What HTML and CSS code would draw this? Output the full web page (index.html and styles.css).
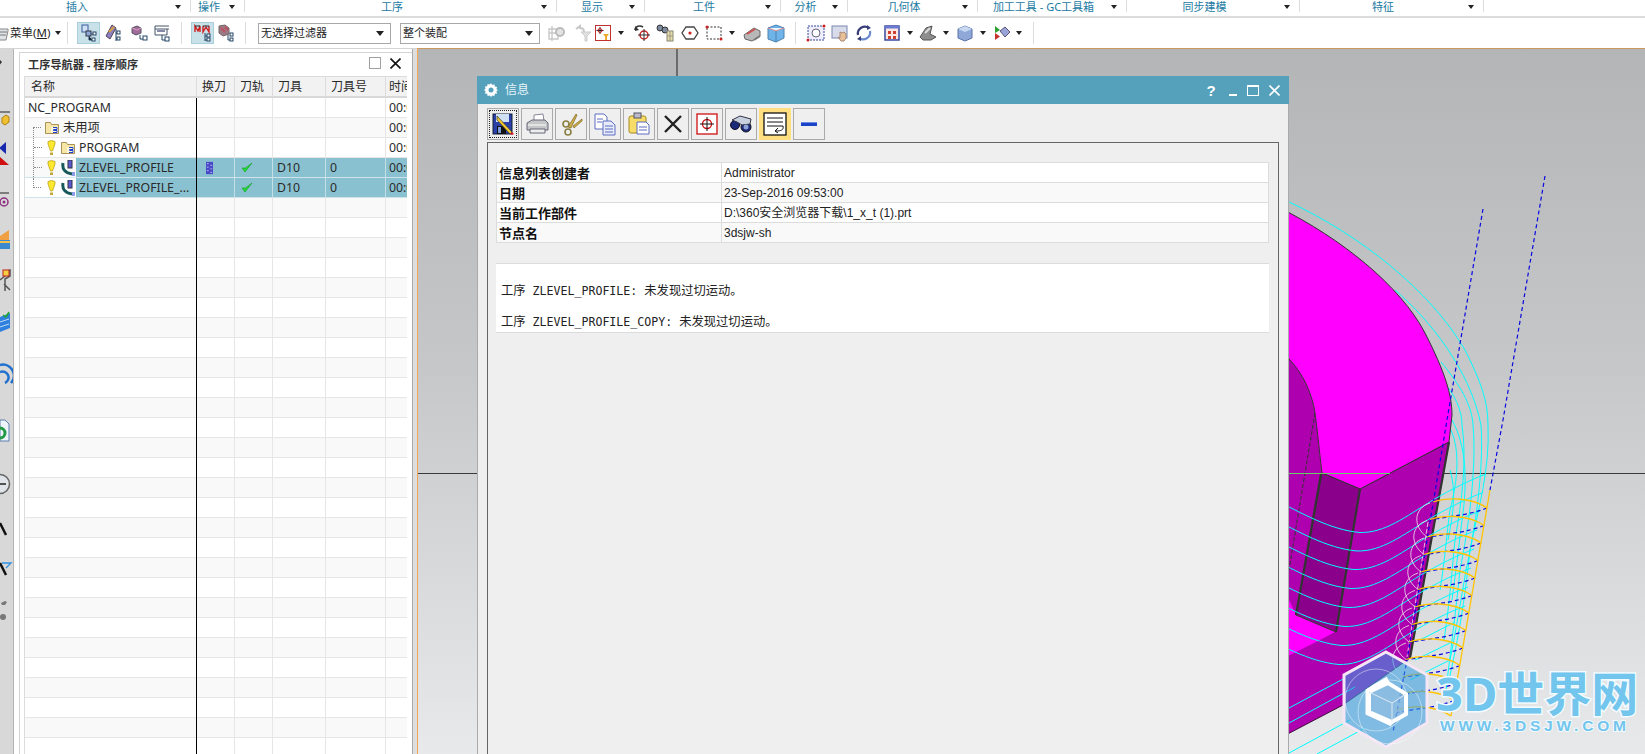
FILE: index.html
```html
<!DOCTYPE html>
<html lang="zh-CN">
<head>
<meta charset="utf-8">
<title>工序导航器</title>
<link rel="stylesheet" href="styles.css">
</head>
<body>
<div class="app">
  <header class="ribbon">
    <div class="group g1"><span>插入</span><i class="arrow"></i></div>
    <div class="group g2"><span>操作</span><i class="arrow"></i></div>
    <div class="group g3"><span>工序</span><i class="arrow"></i></div>
    <div class="group g4"><span>显示</span><i class="arrow"></i></div>
    <div class="group g5"><span>工件</span><i class="arrow"></i></div>
    <div class="group g6"><span>分析</span><i class="arrow"></i></div>
    <div class="group g7"><span>几何体</span><i class="arrow"></i></div>
    <div class="group g8"><span>加工工具 - GC工具箱</span><i class="arrow"></i></div>
    <div class="group g9"><span>同步建模</span><i class="arrow"></i></div>
    <div class="group g10"><span>特征</span><i class="arrow"></i></div>
  </header>

  <nav class="toolbar">
    <svg class="menu-icon" viewBox="0 0 10 20"><path d="M-6 6h14v2l-2 9H-6z" fill="#dfe3e6" stroke="#888"/><path d="M0 9h7M0 12h6" stroke="#777"/></svg>
    <span class="menu-label">菜单(<u>M</u>)</span>
    <i class="arrow a-box"></i>
    <i class="sep s1"></i>
    <div class="t hl"><svg viewBox="0 0 20 20"><rect x="3" y="2" width="6" height="7" fill="#cfe0f5" stroke="#3a5a9a"/><rect x="7" y="8" width="5" height="5" fill="#8fa8d8" stroke="#334"/><path d="M10 13v4h3M12 11h3" stroke="#246"/><rect x="14" y="9" width="3" height="3" fill="#fff" stroke="#246"/><rect x="13" y="15" width="3" height="3" fill="#fff" stroke="#246"/></svg></div>
    <div class="t"><svg viewBox="0 0 20 20"><path d="M10 2 4 13l4 3 6-11z" fill="#8a7fc0" stroke="#545"/><path d="M7 9l5-5" stroke="#d8a040" stroke-width="2"/><path d="M14 6v12M14 10h3M14 16h3" stroke="#246" fill="none"/><rect x="15" y="8" width="3" height="3" fill="#fff" stroke="#246"/><rect x="15" y="14" width="3" height="3" fill="#fff" stroke="#246"/></svg></div>
    <div class="t wide"><svg viewBox="0 0 20 20"><path d="M3 5l5-2 4 2v5l-5 2-4-2z" fill="#a06a9a" stroke="#556"/><path d="M3 5l5 2 4-2" stroke="#d9a0c0" fill="none"/><path d="M11 12v4h3" stroke="#246" fill="none"/><rect x="14" y="13" width="4" height="4" fill="#fff" stroke="#246"/></svg></div>
    <div class="t narrow"><svg viewBox="0 0 16 20"><path d="M1 3h14M1 6h14M1 3v9h12V6" fill="none" stroke="#456"/><path d="M3 8h8" stroke="#88a" stroke-width="2"/><path d="M8 12v5h3" stroke="#246" fill="none"/><rect x="11" y="14" width="4" height="4" fill="#fff" stroke="#246"/></svg></div>
    <i class="sep s2"></i>
    <div class="t hl"><svg viewBox="0 0 20 20"><path d="M2 9V3l3 5 2-5v6M10 3v6l3-5 3 5V3" fill="none" stroke="#d02020" stroke-width="1.400"/><path d="M2 3h5M10 3h6" stroke="#222"/><path d="M12 10v8M12 13h2M12 17h2" stroke="#246" fill="none"/><rect x="14" y="11" width="3" height="3" fill="#fff" stroke="#246"/><rect x="14" y="15" width="3" height="3" fill="#fff" stroke="#246"/></svg></div>
    <div class="t"><svg viewBox="0 0 20 20"><path d="M3 3l6-1 4 3v6l-6 2-4-3z" fill="#9a7a85" stroke="#766"/><path d="M5 5l4 4M9 4l3 3" stroke="#c05060" stroke-width="2"/><path d="M12 12v5h3" stroke="#246" fill="none"/><rect x="14" y="10" width="3" height="3" fill="#fff" stroke="#246"/><rect x="14" y="15" width="3" height="3" fill="#fff" stroke="#246"/></svg></div>
    <i class="sep s3"></i>
    <div class="combo c1"><span>无选择过滤器</span><i class="arrow"></i></div>
    <div class="combo c2"><span>整个装配</span><i class="arrow"></i></div>

    <div class="t m4"><svg viewBox="0 0 20 20"><path d="M3 6h9v10H3zM6 3v15M3 10h9" fill="none" stroke="#c8c8c8" stroke-width="1.400"/><circle cx="14" cy="9" r="4" fill="#e4e4e4" stroke="#bbb" stroke-width="2"/></svg></div>
    <div class="t m3"><svg viewBox="0 0 20 20"><path d="M3 6l4-3v2c3 0 4 2 4 4" fill="none" stroke="#c8c8c8" stroke-width="2"/><path d="M8 9h10l-4 4v5h-2v-5z" fill="#e0e0e0" stroke="#ccc"/></svg></div>
    <div class="t box16"><svg viewBox="0 0 16 16"><rect x=".5" y=".5" width="15" height="15" fill="#fff" stroke="#c23030"/><path d="M5 2v7M1.500 5.500h7" stroke="#222"/><circle cx="5" cy="5.500" r="2" fill="none" stroke="#c22"/><path d="M8 9h6l-2 2.500V15h-2v-3.500z" fill="#eda92a"/></svg></div>
    <i class="arrow a-box m4"></i>
    <div class="t m3"><svg viewBox="0 0 20 20"><path d="M3 7c0-4 5-5 8-3" fill="none" stroke="#333" stroke-width="1.600"/><path d="M3 3l0 5 4-1z" fill="#333"/><circle cx="12" cy="12" r="4" fill="none" stroke="#c22" stroke-width="1.500"/><path d="M12 6v12M6 12h12" stroke="#333"/></svg></div>
    <div class="t n22"><svg viewBox="0 0 20 20"><circle cx="5" cy="5" r="3" fill="#7d8aa0" stroke="#333"/><circle cx="10" cy="7" r="3" fill="#7d8aa0" stroke="#333"/><rect x="12" y="8" width="6" height="10" fill="#e8dca8" stroke="#887"/><path d="M15 8v10M12 13h6" stroke="#998"/></svg></div>
    <div class="t m2"><svg viewBox="0 0 20 20"><path d="M6 4h8l4 6-4 6H6l-4-6z" fill="#fff" stroke="#444" stroke-width="1.300"/><circle cx="10" cy="10" r="1.600" fill="#c22"/></svg></div>
    <div class="t"><svg viewBox="0 0 20 20"><rect x="3" y="4" width="14" height="12" fill="none" stroke="#333" stroke-dasharray="2 1.500"/><circle cx="3" cy="4" r="1.500" fill="#c22"/><circle cx="17" cy="16" r="1.500" fill="#c22"/></svg></div>
    <i class="arrow a-box"></i>
    <div class="t m2"><svg viewBox="0 0 20 20"><path d="M2 12l10-7 6 3v5l-8 5-7-2z" fill="#b8b8b8" stroke="#666"/><path d="M5 11l8-5" stroke="#d05050" stroke-width="2"/><path d="M12 17l6-4" stroke="#777" stroke-width="2"/></svg></div>
    <div class="t"><svg viewBox="0 0 20 20"><path d="M2 5l8-3 8 3v10l-8 4-8-3z" fill="#6fb4e8" stroke="#4a82b0"/><path d="M2 5l8 3 8-3" fill="#e8f3fb" stroke="#d88"/><path d="M10 8v11" stroke="#4a82b0"/></svg></div>
    <i class="sep s4"></i>
    <div class="t"><svg viewBox="0 0 20 20"><rect x="2" y="3" width="16" height="14" fill="#eef" stroke="#3a4a9a" stroke-dasharray="2 1"/><circle cx="10" cy="10" r="4" fill="#fff" stroke="#667"/><circle cx="2" cy="17" r="1.500" fill="#c22"/><circle cx="18" cy="3" r="1.500" fill="#c22"/></svg></div>
    <div class="t"><svg viewBox="0 0 20 20"><rect x="2" y="3" width="15" height="12" fill="#d8dcea" stroke="#7a86b0"/><path d="M10 9l2 1 2-1 2 2v4l-2 3h-3l-3-4 2 1z" fill="#e8c098" stroke="#a87"/></svg></div>
    <div class="t"><svg viewBox="0 0 20 20"><path d="M4 12A7 7 0 0 1 15 5" fill="none" stroke="#3a3f7a" stroke-width="2.200"/><path d="M16 8A7 7 0 0 1 5 15" fill="none" stroke="#6a8ad0" stroke-width="2.200"/><path d="M13 2l4 3-4 2zM7 13l-4 3 4 2z" fill="#3a3f7a"/></svg></div>
    <div class="t m4"><svg viewBox="0 0 20 20"><rect x="3" y="3" width="14" height="14" fill="#fbe8e4" stroke="#3a4aa0" stroke-width="1.500"/><rect x="3" y="3" width="14" height="2.500" fill="#6a7ad0"/><path d="M6 8h3v3H6zM11 8h3v3h-3zM6 13h3v3H6zM11 13h3v3h-3z" fill="#d04030"/></svg></div>
    <i class="arrow a-box"></i>
    <div class="t"><svg viewBox="0 0 20 20"><path d="M2 14l6-9 6-2-2 8 6 3-5 3H5z" fill="#8d8d8d" stroke="#555"/><path d="M7 10l5-5" stroke="#ddd" stroke-width="2"/></svg></div>
    <i class="arrow a-box"></i>
    <div class="t m1"><svg viewBox="0 0 20 20"><path d="M3 6l7-3 7 3v9l-7 3-7-3z" fill="#8ea8d8" stroke="#5a70a8"/><path d="M3 6l7 3 7-3-7-3z" fill="#c8d8f0"/></svg></div>
    <i class="arrow a-box"></i>
    <div class="t"><svg viewBox="0 0 20 20"><path d="M9 8l5-4 5 5-5 5z" fill="#9aa4d8" stroke="#557"/><path d="M4 3v7l5-3z" fill="#2ca02c"/><path d="M4 10v7l5-3.500z" fill="#c83030"/></svg></div>
    <i class="arrow a-box"></i>
    <i class="sep s5"></i>
  </nav>

  <main class="workspace">
    <aside class="strip">
      <svg viewBox="0 49 13 705">
        <path d="M-2 58l4 4-4 5" fill="#333"/>
        <path d="M0 112h10" stroke="#222"/><path d="M2 118l4-3 3 2v5l-4 3-3-2z" fill="#f0c030" stroke="#b08010"/>
        <path d="M6 142v12l-7-6z" fill="#1a2ab0"/><path d="M-1 156l10 9H-1z" fill="#d01010"/>
        <path d="M0 193h9" stroke="#222"/><circle cx="4" cy="202" r="4" fill="none" stroke="#903080" stroke-width="1.500"/><circle cx="4" cy="202" r="1.500" fill="#903080"/>
        <path d="M0 236l9-6v10H0z" fill="#f0a040"/><path d="M0 240h10v9H0z" fill="#3a8ad0"/><path d="M0 242h10" stroke="#f4c050" stroke-width="2"/>
        <path d="M0 280l5-4v-4l5-2v6l-5 3v12M4 284l6 6" fill="none" stroke="#555" stroke-width="1.500"/><rect x="3" y="270" width="6" height="6" fill="#f6d040" stroke="#c02020"/>
        <path d="M0 317l10-4v15l-10 4z" fill="#3080e0"/><path d="M0 322l9-3M0 327l9-3" stroke="#bde"/><path d="M3 315l3 2 3-5" stroke="#2a2" fill="none" stroke-width="1.500"/>
        <path d="M0 365a11 11 0 0 1 11 18M0 372a6 6 0 0 1 5 11" fill="none" stroke="#2070d0" stroke-width="2.500"/>
        <path d="M0 420h5l4 4v17H0z" fill="#eef4fb" stroke="#5a80b0"/><path d="M0 428a5 5 0 0 1 0 10" fill="none" stroke="#229a44" stroke-width="3"/>
        <circle cx="0" cy="484" r="9.500" fill="#dfe3ea" stroke="#666" stroke-width="1.500"/><path d="M0 484h6" stroke="#222" stroke-width="1.500"/>
        <path d="M0 523l6 12" stroke="#111" stroke-width="2.500"/>
        <path d="M0 563l6 12" stroke="#111" stroke-width="2.500"/><path d="M2 563h9l-5 5" fill="none" stroke="#3090e0" stroke-width="1.300"/>
        <path d="M1 603l4-2 2 1-2 3H2zM0 617a3 3 0 0 1 6 0 3 3 0 0 1-6 0" fill="#777"/>
      </svg>
    </aside>

    <section class="navigator">
      <div class="nav-title">
        <h2>工序导航器 - 程序顺序</h2>
        <i class="nav-max"></i>
        <svg class="nav-close" viewBox="0 0 11 11"><path d="M.5.5l10 10M10.500.5l-10 10" stroke="#111" stroke-width="1.600"/></svg>
      </div>
      <div class="table">
        <div class="row head"><span>名称</span><span>换刀</span><span>刀轨</span><span>刀具</span><span>刀具号</span><span>时间</span></div>
        <div class="rows">
          <div class="row">
            <span class="name plain">NC_PROGRAM</span><span></span><span></span><span></span><span></span><span>00:00</span>
          </div>
          <div class="row">
            <span class="name"><i class="conn first short"></i>
              <svg class="folder" viewBox="0 0 14 12"><path d="M.5 11.500v-11h5l1 2h7v9z" fill="#f6e6a8" stroke="#a8925a"/><path d="M6 5h7v6H6z" fill="#fff8d8"/><path d="M8 5.500h4v2H8.500v1H12v2H8" fill="none" stroke="#2040d0"/></svg>
              <b>未用项</b></span><span></span><span></span><span></span><span></span><span>00:00</span>
          </div>
          <div class="row">
            <span class="name"><i class="conn"></i>
              <svg class="bulb" viewBox="0 0 9 16"><path d="M1 1.500 4.500.5 8 1.500V4L5.500 11h-2L1 4z" fill="#ffe92e" stroke="#b09a10" stroke-width=".7"/><path d="M3 12.500h3V15H3z" fill="#c2a83a"/></svg>
              <svg class="folder" viewBox="0 0 14 12"><path d="M.5 11.500v-11h5l1 2h7v9z" fill="#f6e6a8" stroke="#a8925a"/><path d="M6 5h7v6H6z" fill="#fff8d8"/><path d="M8 5.500h4v2H8.500v1H12v2H8" fill="none" stroke="#2040d0"/></svg>
              <b>PROGRAM</b></span><span></span><span></span><span></span><span></span><span>00:00</span>
          </div>
          <div class="row sel">
            <span class="name"><i class="conn"></i>
              <svg class="bulb" viewBox="0 0 9 16"><path d="M1 1.500 4.500.5 8 1.500V4L5.500 11h-2L1 4z" fill="#ffe92e" stroke="#b09a10" stroke-width=".7"/><path d="M3 12.500h3V15H3z" fill="#c2a83a"/></svg>
              <svg class="op" viewBox="0 0 14 16"><path d="M2 3c-1 6 2 10 9 11" fill="none" stroke="#17585a" stroke-width="3"/><rect x="7" y="0" width="4" height="8" fill="#5a5ad0" stroke="#334"/><path d="M11 13h3M11 15h3" stroke="#2040d0"/></svg>
              <b>ZLEVEL_PROFILE</b></span>
            <span class="center"><svg class="tool" viewBox="0 0 8 14"><rect width="8" height="14" fill="#4a4ac8"/><path d="M1 2h2M5 4h2M1 6h2M5 8h2M1 10h2M5 12h2" stroke="#c0c8f0"/></svg></span>
            <span class="center"><svg class="check" viewBox="0 0 12 11"><path d="M1 6l3 4 7-9-6.500 5z" fill="#22dd33" stroke="#119922" stroke-width=".6"/></svg></span>
            <span>D10</span><span>0</span><span>00:00</span>
          </div>
          <div class="row sel">
            <span class="name"><i class="conn last"></i>
              <svg class="bulb" viewBox="0 0 9 16"><path d="M1 1.500 4.500.5 8 1.500V4L5.500 11h-2L1 4z" fill="#ffe92e" stroke="#b09a10" stroke-width=".7"/><path d="M3 12.500h3V15H3z" fill="#c2a83a"/></svg>
              <svg class="op" viewBox="0 0 14 16"><path d="M2 3c-1 6 2 10 9 11" fill="none" stroke="#17585a" stroke-width="3"/><rect x="7" y="0" width="4" height="8" fill="#5a5ad0" stroke="#334"/><path d="M11 13h3M11 15h3" stroke="#2040d0"/></svg>
              <b>ZLEVEL_PROFILE_...</b></span>
            <span></span>
            <span class="center"><svg class="check" viewBox="0 0 12 11"><path d="M1 6l3 4 7-9-6.500 5z" fill="#22dd33" stroke="#119922" stroke-width=".6"/></svg></span>
            <span>D10</span><span>0</span><span>00:00</span>
          </div>
          <div class="row blank"></div><div class="row blank"></div><div class="row blank"></div><div class="row blank"></div>
          <div class="row blank"></div><div class="row blank"></div><div class="row blank"></div><div class="row blank"></div>
          <div class="row blank"></div><div class="row blank"></div><div class="row blank"></div><div class="row blank"></div>
          <div class="row blank"></div><div class="row blank"></div><div class="row blank"></div><div class="row blank"></div>
          <div class="row blank"></div><div class="row blank"></div><div class="row blank"></div><div class="row blank"></div>
          <div class="row blank"></div><div class="row blank"></div><div class="row blank"></div><div class="row blank"></div>
          <div class="row blank"></div><div class="row blank"></div><div class="row blank"></div><div class="row blank"></div>
        </div>
      </div>
    </section>
    <div class="gutter"></div>

    <section class="canvas">
      <svg class="scene" viewBox="418 49 1227 705">
        <defs>
          <path id="cy" d="M1275 500C1300 512 1330 530 1360 532.500C1385 533 1405 517 1433 500C1450 490 1470 480 1486 474"/>
          <path id="yl" d="M1433 502C1445 498 1470 496 1487 508"/>
          <path id="bl" d="M1487 508C1470 515 1450 516 1430 520"/>
          <path id="wh" d="M1430 503C1414 508 1412 526 1427 537"/>
        </defs>
        <path d="M677 49V76M418 473.500H1645" stroke="#3a3a3a" stroke-width="1.200" fill="none"/>

        <g class="cyan">
          <path d="M1289 202C1360 235 1430 290 1465 350C1480 380 1488 400 1488 425C1490 470 1478 510 1470 550C1465 600 1458 640 1449 680"/>
          <path d="M1395 290C1430 320 1470 370 1481 425C1484 470 1475 530 1466 570C1461 600 1456 630 1450 660"/>
          <path d="M1441 362C1460 385 1472 405 1473 425C1477 470 1468 530 1460 570C1457 600 1452 640 1446 690"/>
          <path d="M1442 380C1455 395 1462 410 1462 425C1467 460 1462 500 1455 540C1452 570 1450 600 1444 640"/>
          <path d="M1451 430C1460 450 1458 480 1450 510C1447 530 1445 560 1440 590"/>
          <path d="M1452 420C1466 445 1468 480 1462 520C1459 545 1456 570 1452 600"/>
          <path d="M1450 470C1456 490 1454 510 1448 540"/>
        </g>

        <path d="M1289 356C1300 368 1308 385 1313 403C1316 415 1318 440 1322 473L1296 615L1280 640V350Z" fill="#ae00ae"/>
        <path d="M1360 489L1449 442L1410 658L1343 705L1280 738V657L1336 632Z" fill="#ae00ae" stroke="#3a103a"/>
        <path d="M1280 208C1340 238 1400 285 1425 333C1445 372 1452 395 1452 415L1449 442L1360 489L1322 473C1318 440 1316 415 1313 403C1308 385 1300 368 1280 350Z" fill="#ff00ff" stroke="#333"/>
        <path d="M1280 580L1296 615L1336 632L1280 660Z" fill="#ff00ff"/>
        <path d="M1322 473L1360 489L1336 632L1296 615Z" fill="#8b008b" stroke="#333"/>
        <path d="M1321 474L1296 615M1360 489L1336 632M1449 442L1410 658" stroke="#333" stroke-width="2.200" fill="none"/>
        <path d="M1315 413L1289 570" stroke="#333" stroke-dasharray="4 2" fill="none"/>
        <path d="M1289 473.500H1390" stroke="#66d066" stroke-width="1.200"/>

        <g class="cyan">
          <use href="#cy"/><use href="#cy" transform="translate(-3 18.500)"/><use href="#cy" transform="translate(-6 37)"/><use href="#cy" transform="translate(-9 56)"/>
          <use href="#cy" transform="translate(-12 75)"/><use href="#cy" transform="translate(-15 94)"/><use href="#cy" transform="translate(-18 113)"/><use href="#cy" transform="translate(-21 132)"/>
          <path d="M1289 708L1345 678M1289 723L1355 687M1289 753L1350 720M1317 754L1365 728M1420 640L1455 622M1415 660L1452 642M1410 680L1450 660"/>
        </g>

        <g class="white">
          <use href="#wh"/><use href="#wh" transform="translate(-3 17.500)"/><use href="#wh" transform="translate(-6 35)"/><use href="#wh" transform="translate(-9 52.500)"/><use href="#wh" transform="translate(-12 70)"/>
          <use href="#wh" transform="translate(-15 87.500)"/><use href="#wh" transform="translate(-18 105)"/><use href="#wh" transform="translate(-21 122.500)"/><use href="#wh" transform="translate(-24 140)"/>
          <path d="M1428 522L1407 657" stroke-dasharray="5 2"/>
        </g>

        <g class="blue">
          <path d="M1483 209L1447 420L1407 660L1393 732"/>
          <path d="M1545 176L1503 420L1490 490"/>
          <use href="#bl"/><use href="#bl" transform="translate(-3 17.500)"/><use href="#bl" transform="translate(-6 35)"/><use href="#bl" transform="translate(-9 52.500)"/>
          <use href="#bl" transform="translate(-12 70)"/><use href="#bl" transform="translate(-15 87.500)"/><use href="#bl" transform="translate(-18 105)"/><use href="#bl" transform="translate(-21 122.500)"/>
          <use href="#bl" transform="translate(-24 140)"/><use href="#bl" transform="translate(-27 157.500)"/><use href="#bl" transform="translate(-30 175)"/><use href="#bl" transform="translate(-33 192.500)"/>
        </g>

        <g class="yellow">
          <path d="M1490 490L1451 716"/>
          <use href="#yl"/><use href="#yl" transform="translate(-3 17.500)"/><use href="#yl" transform="translate(-6 35)"/><use href="#yl" transform="translate(-9 52.500)"/>
          <use href="#yl" transform="translate(-12 70)"/><use href="#yl" transform="translate(-15 87.500)"/><use href="#yl" transform="translate(-18 105)"/><use href="#yl" transform="translate(-21 122.500)"/>
          <use href="#yl" transform="translate(-24 140)"/><use href="#yl" transform="translate(-27 157.500)"/><use href="#yl" transform="translate(-30 175)"/><use href="#yl" transform="translate(-33 192.500)"/>
          <use href="#yl" transform="translate(-36 208)"/>
        </g>

        <g class="mark">
          <path class="hex" d="M1386 652L1427 675V723L1386 747L1344 723V675Z"/>
          <circle cx="1390" cy="712" r="32" class="ring"/>
          <circle cx="1376" cy="700" r="31" class="ring"/>
          <path class="inner" d="M1388 679L1368 691V713L1392 724"/>
          <path class="cube" d="M1388 683L1406 694V714L1392 722L1369 712V692Z"/>
          <path class="cube-top" d="M1369 692L1392 703L1406 694M1392 703V722"/>
          <text x="1436" y="711" class="mark-big">3D世界网</text>
          <text x="1440" y="731" class="mark-small">WWW.3DSJW.COM</text>
        </g>
      </svg>

      <div class="dialog">
        <div class="dlg-title">
          <svg class="gear" viewBox="0 0 14 14"><path d="M7 0l1.200 2 2.200-.7.400 2.300 2.300.4-.7 2.200L14 7l-1.600 1.200.7 2.200-2.300.4-.4 2.300-2.200-.7L7 14l-1.200-1.600-2.200.7-.4-2.300-2.300-.4.700-2.200L0 7l1.600-1.200-.7-2.200 2.300-.4.400-2.300 2.200.7z" fill="#fff"/><circle cx="7" cy="7" r="2.500" fill="#55a1bc"/></svg>
          <span class="dlg-name">信息</span>
          <span class="dlg-q">?</span>
          <i class="dlg-min"></i>
          <i class="dlg-max"></i>
          <svg class="dlg-close" viewBox="0 0 11 11"><path d="M.5.5l10 10M10.500.5l-10 10" stroke="#fff" stroke-width="1.600"/></svg>
        </div>
        <div class="dlg-tools">
          <button class="btn focus"><svg viewBox="0 0 24 24"><rect x="2" y="2" width="19" height="20" fill="#2a3fa8" stroke="#123"/><rect x="5" y="2" width="13" height="8" fill="#cfe0f4"/><rect x="6" y="14" width="9" height="8" fill="#111"/><rect x="7" y="15" width="3" height="6" fill="#7a9ae0"/><path d="M6 4l15 16-2 2L6 8z" fill="#f2c830" stroke="#333" stroke-width=".7"/><path d="M19 22l2-2 2 2-2 1z" fill="#e02030"/></svg></button>
          <button class="btn"><svg viewBox="0 0 24 24"><path d="M9 3l9-1 1 7H9z" fill="#fff" stroke="#889"/><path d="M2 11l5-3h13l3 3v7H2z" fill="#c4c6c8" stroke="#667"/><path d="M5 17h15v4H5z" fill="#eee" stroke="#667"/><path d="M3 13h18" stroke="#fff"/></svg></button>
          <button class="btn"><svg viewBox="0 0 24 24"><path d="M9 15L17 2l1 1-6 13zM14 14l9-7v2l-8 7z" fill="#d0b04a" stroke="#7a6420" stroke-width=".7"/><circle cx="7" cy="12" r="3" fill="none" stroke="#8a8040" stroke-width="1.600"/><circle cx="9" cy="20" r="3" fill="none" stroke="#8a8040" stroke-width="1.600"/></svg></button>
          <button class="btn"><svg viewBox="0 0 24 24"><path d="M2 2h9l3 3v12H2z" fill="#fff" stroke="#5a6ac0"/><path d="M10 9h8l4 4v10H10z" fill="#e8ecfa" stroke="#5a6ac0"/><path d="M4 7h6M4 10h5M12 14h8M12 17h8M12 20h8" stroke="#5a6ac0"/></svg></button>
          <button class="btn"><svg viewBox="0 0 24 24"><rect x="2" y="4" width="17" height="17" rx="2" fill="#f7dc68" stroke="#a88a20"/><rect x="7" y="1" width="7" height="5" fill="#bbc" stroke="#556"/><path d="M10 10h9l3 3v9H10z" fill="#fff" stroke="#5a6ac0"/><path d="M12 15h8M12 18h8" stroke="#5a6ac0"/></svg></button>
          <button class="btn"><svg viewBox="0 0 24 24"><path d="M4 4l16 16M20 4L4 20" stroke="#222" stroke-width="2.400"/></svg></button>
          <button class="btn"><svg viewBox="0 0 24 24"><rect x="2" y="2" width="20" height="20" fill="#fff" stroke="#d01010" stroke-width="1.300"/><circle cx="12" cy="12" r="4.500" fill="none" stroke="#d01010" stroke-width="1.300"/><path d="M12 5v14M5 12h14" stroke="#111"/></svg></button>
          <button class="btn"><svg viewBox="0 0 24 24"><circle cx="6" cy="13" r="4.500" fill="#1a2a78" stroke="#112"/><circle cx="17" cy="15" r="5" fill="#1a2a78" stroke="#112"/><path d="M3 8l8-4 11 3-1 5-8 1-5-3z" fill="#c8d0e0" stroke="#334"/><circle cx="17" cy="15" r="2.500" fill="#8fa0d8"/></svg></button>
          <button class="btn on"><svg viewBox="0 0 24 24"><rect x="1" y="1" width="22" height="22" fill="#fff" stroke="#111" stroke-width="1.300"/><path d="M4 6h16M4 10h16M4 14h16c1 4-2 5-7 5" fill="none" stroke="#111"/><path d="M15 16l-3 3 3 2" fill="none" stroke="#111"/></svg></button>
          <button class="btn"><svg viewBox="0 0 24 24"><rect x="4" y="10" width="16" height="4" fill="#1a44c8"/><rect x="4" y="10" width="16" height="1" fill="#6a8ae8"/></svg></button>
        </div>
        <div class="dlg-body">
          <div class="info">
            <div class="info-row"><b>信息列表创建者</b><span>Administrator</span></div>
            <div class="info-row"><b>日期</b><span>23-Sep-2016 09:53:00</span></div>
            <div class="info-row"><b>当前工作部件</b><span>D:\360安全浏览器下载\1_x_t (1).prt</span></div>
            <div class="info-row"><b>节点名</b><span>3dsjw-sh</span></div>
          </div>
          <div class="message">
            <p>工序<code> ZLEVEL_PROFILE: </code>未发现过切运动。</p>
            <p>工序<code> ZLEVEL_PROFILE_COPY: </code>未发现过切运动。</p>
          </div>
        </div>
      </div>
    </section>
  </main>
</div>
</body>
</html>
```
FILE: styles.css
```css
* { box-sizing: border-box; }
html, body { margin: 0; height: 100%; overflow: hidden; background: #fff; }
body { font: 12px/1.2 "Noto Sans", "Noto Sans CJK SC", sans-serif; color: #222; }
i { display: block; font-style: normal; }
svg { display: block; }

.app { width: 1645px; height: 754px; display: flex; flex-direction: column; overflow: hidden; }

/* ribbon tabs */
.ribbon { height: 18px; flex: none; display: flex; align-items: flex-start; border-bottom: 2px solid #dcdcdc; overflow: hidden; }
.group { height: 12px; flex: none; display: flex; border-right: 1px solid #dcdcdc; font-size: 11px; line-height: 14px; color: #1b7aa2; }
.group span { flex: 1; text-align: center; white-space: nowrap; }
.group .arrow { width: 17px; }
.group .arrow::after { margin: 5px 0 0 2px; }
.arrow::after { content: ""; display: block; width: 0; height: 0; border: 3.500px solid transparent; border-top: 4px solid #222; border-bottom: 0; }
.g1 { width: 210px; margin-left: -19px; }
.g2 { width: 54px; }
.g3 { width: 312px; }
.g4 { width: 88px; }
.g5 { width: 136px; }
.g6 { width: 67px; }
.g7 { width: 130px; }
.g8 { width: 149px; }
.g9 { width: 173px; }
.g10 { width: 184px; }

/* command bar */
.toolbar { height: 30px; flex: none; display: flex; align-items: center; }
.menu-icon { width: 10px; height: 20px; flex: none; }
.menu-label { width: 42px; flex: none; font-size: 11.500px; white-space: nowrap; color: #222; }
.menu-label u { text-decoration: underline; }
.a-box { width: 12px; flex: none; display: flex; justify-content: center; }
.sep { width: 1px; height: 22px; flex: none; background: #dcdcdc; }
.s1 { margin: 0 9px 0 3px; }
.s2 { margin: 0 9px 0 11px; }
.s3 { margin-left: 7px; }
.s4 { margin: 0 8px 0 7px; }
.s5 { margin-left: 8px; }
.t { width: 24px; height: 22px; flex: none; display: flex; align-items: center; justify-content: center; }
.t svg { width: 20px; height: 20px; }
.t.hl { width: 23px; background: #c9e2ea; border: 1px solid #a9cfdb; }
.t.wide { width: 30px; }
.t.narrow { width: 16px; }
.t.narrow svg { width: 16px; }
.t.n22 { width: 22px; }
.t.box16 { width: 16px; }
.t.box16 svg { width: 16px; height: 16px; }
.m1 { margin-left: 1px; }
.m2 { margin-left: 2px; }
.m3 { margin-left: 3px; }
.m4 { margin-left: 4px; }
.combo { height: 21px; flex: none; display: flex; align-items: center; justify-content: space-between; padding: 0 6px 0 2px; border: 1px solid #a8a8a8; background: #fff; font-size: 11px; color: #222; }
.c1 { width: 133px; margin-left: 12px; }
.c2 { width: 140px; margin-left: 9px; }
.combo .arrow::after { border-width: 4px; border-top-width: 5px; border-bottom: 0; }

/* body */
.workspace { flex: 1; min-height: 0; display: flex; border-top: 1px solid #d4d4d4; }
.strip { width: 14px; flex: none; background: #d8d8d8; border-right: 1px solid #b4b4b4; overflow: hidden; }
.strip svg { width: 13px; height: 705px; }

.navigator { width: 393px; flex: none; margin: 3px 0 0 5px; background: #fff; border: 1px solid #d4d4d4; border-bottom: 0; border-right: 0; padding: 0 6px 0 4px; display: flex; flex-direction: column; overflow: hidden; }
.nav-title { height: 23px; flex: none; display: flex; align-items: center; padding: 0 5px 0 4px; }
.nav-title h2 { margin: 0; flex: 1; font-size: 11.200px; font-weight: 700; color: #333; }
.nav-max { width: 12px; height: 12px; border: 1px solid #a0a0a0; margin-bottom: 3px; }
.nav-close { width: 11px; height: 11px; margin-left: 9px; margin-bottom: 3px; }

.table { flex: 1; min-height: 0; border-left: 1px solid #dcdcdc; border-top: 1px solid #dcdcdc; overflow: hidden; width: 383px; }
.row { height: 20px; display: grid; grid-template-columns: 172px 38px 38px 53px 60px 21px; border-bottom: 1px solid #e6e6e6; font-size: 12.300px; line-height: 19px; color: #2a2a2a; }
.row > span { overflow: hidden; white-space: nowrap; border-right: 1px solid #e6e6e6; padding-left: 4px; }
.row > span:last-child { border-right: 0; padding-left: 3px; }
.rows { position: relative; }
.rows::after { content: ""; position: absolute; left: 171px; top: 0; bottom: 0; width: 1px; background: #000; }
.rows > .row > span:first-child { padding-left: 0; }
.rows > .row > .plain:first-child { padding-left: 3px; }
.head { height: 21px; background: #f2f2f2; border-bottom: 2px solid #d8d8d8; line-height: 19px; font-size: 12px; }
.head > span { border-right-color: #dcdcdc; padding-left: 5px; }
.head > span:first-child { padding-left: 6px; }
.rows .row:nth-child(even) { background-color: #f9f9f9; }
.blank {
  background-image:
    linear-gradient(#e6e6e6, #e6e6e6), linear-gradient(#e6e6e6, #e6e6e6),
    linear-gradient(#e6e6e6, #e6e6e6), linear-gradient(#e6e6e6, #e6e6e6);
  background-size: 1px 100%;
  background-repeat: no-repeat;
  background-position: 209px 0, 247px 0, 300px 0, 360px 0;
}
.rows .name { display: flex; align-items: stretch; }
.rows .name.plain { display: block; }
.name b { flex: 1; font-weight: 400; padding-left: 3px; margin-left: 1px; white-space: nowrap; overflow: hidden; }
.conn { position: relative; flex: none; width: 14px; margin-left: 8px; border-left: 1px dotted #888; height: 19px; }
.conn::after { content: ""; position: absolute; left: 0; top: 9px; width: 8px; border-top: 1px dotted #888; }
.conn.first { border-left: 0; width: 12px; }
.conn.first::before { content: ""; position: absolute; left: 0; top: 9px; bottom: 0; border-left: 1px dotted #888; }
.conn.last { border-left: 0; }
.conn.last::before { content: ""; position: absolute; left: 0; top: 0; height: 10px; border-left: 1px dotted #888; }
.folder { width: 14px; height: 12px; flex: none; align-self: center; }
.bulb { width: 9px; height: 16px; flex: none; align-self: center; margin-right: 5px; }
.op { width: 14px; height: 16px; flex: none; align-self: center; }
.sel b, .sel > span:not(.name) { background: #8ac1d0; border-right-color: #c4dfe6; }
.sel { border-bottom-color: #cfe4ea; }
.center { display: flex; align-items: center; justify-content: center; }
.row > .center { padding-left: 0; }
.tool { width: 7px; height: 14px; margin-right: 12px; }
.check { width: 12px; height: 11px; margin-right: 14px; }

.gutter { width: 5px; flex: none; background: #dedede; border-left: 1px solid #aaa; }

/* graphics window */
.canvas { position: relative; flex: 1; min-width: 0; border-left: 1px solid #f4a653; margin-top: -1px; border-top: 1px solid #c99a62; overflow: hidden; background: linear-gradient(#b4b5b7, #c6c7c9 45%, #e8e9eb); }
.scene { position: absolute; left: 0; top: 0; width: 1227px; height: 705px; }
.cyan { stroke: #00ffff; fill: none; stroke-width: 1; }
.white { stroke: #f0ecf0; fill: none; stroke-width: .8; }
.blue { stroke: #0808e0; fill: none; stroke-width: 1.200; stroke-dasharray: 4 3; }
.yellow { stroke: #ffc400; fill: none; stroke-width: 1.300; }
.hex { fill: rgba(58, 159, 224, .6); stroke: #f5e6f5; stroke-width: 3; }
.ring { fill: none; stroke: rgba(255, 255, 255, .45); }
.inner { stroke: #fff; stroke-width: 5; fill: none; }
.cube { fill: rgba(150, 190, 225, .55); stroke: #fff; stroke-width: 4; }
.cube-top { stroke: #dfe9f2; stroke-width: 1; fill: none; }
.mark-big { font: 700 47px "Noto Sans", "Noto Sans CJK SC", sans-serif; fill: #72c5ec; stroke: #f2fbff; stroke-width: 3; paint-order: stroke fill; }
.mark-small { font: 700 15.500px "Liberation Sans", sans-serif; letter-spacing: 3.800px; fill: #72c5ec; stroke: #f2fbff; stroke-width: 2; paint-order: stroke fill; }

/* information window */
.dialog { position: absolute; left: 59px; top: 27px; width: 812px; height: 700px; background: #efefef; border-left: 1px solid #aaa; border-right: 1px solid #aaa; }
.dlg-title { height: 28px; margin: 0 -1px; background: #55a1bc; display: flex; align-items: center; padding-left: 7px; color: #e9f5f9; }
.gear { width: 14px; height: 14px; }
.dlg-name { flex: 1; font-size: 12px; margin-left: 7px; }
.dlg-q { width: 20px; font: 700 15px "Liberation Sans", sans-serif; color: #fff; text-align: center; margin-right: 1px; }
.dlg-min { width: 8px; height: 2px; background: #fff; margin: 10px 0 0 7px; }
.dlg-max { width: 12px; height: 11px; border: 1px solid #fff; border-top-width: 2px; margin-left: 10px; }
.dlg-close { width: 11px; height: 11px; margin: 0 9px 0 10px; }
.dlg-tools { display: flex; gap: 2px; padding: 4px 0 0 9px; }
.btn { width: 32px; height: 32px; padding: 3px; flex: none; background: #efefef; border: 1px solid #aaa; border-radius: 0; }
.btn svg { width: 24px; height: 24px; }
.btn.focus { outline: 1px dotted #222; outline-offset: -3px; }
.btn.on { background: #ffdf80; border-color: #ffdf80; }
.dlg-body { margin: 2px 9px 0 9px; height: 640px; padding: 19px 9px 0 8px; border: 1px solid #666; }
.info { border: 1px solid #dcdcdc; border-bottom: 0; }
.info-row { height: 20px; display: grid; grid-template-columns: 225px 1fr; border-bottom: 1px solid #dcdcdc; background: #fff; line-height: 19px; }
.info-row:nth-child(even) { background: #f9f9f9; }
.info-row b { font: 700 13px/19px "Noto Sans CJK SC", sans-serif; color: #111; padding-left: 2px; border-right: 1px solid #dcdcdc; }
.info-row span { font: 12px/20px "Liberation Sans", "Noto Sans CJK SC", sans-serif; padding-left: 2px; color: #222; }
.message { margin-top: 20px; height: 70px; background: #fff; border-top: 1px solid #dcdcdc; border-bottom: 1px solid #dcdcdc; padding: 18px 0 0 5px; }
.message p { margin: 0 0 12.500px; font: 12.300px/17px "Noto Sans CJK TC", "Noto Sans CJK SC", sans-serif; color: #222; white-space: nowrap; }
.message code { font: 11.600px/17px "DejaVu Sans Mono", monospace; color: #222; white-space: pre; }
```
